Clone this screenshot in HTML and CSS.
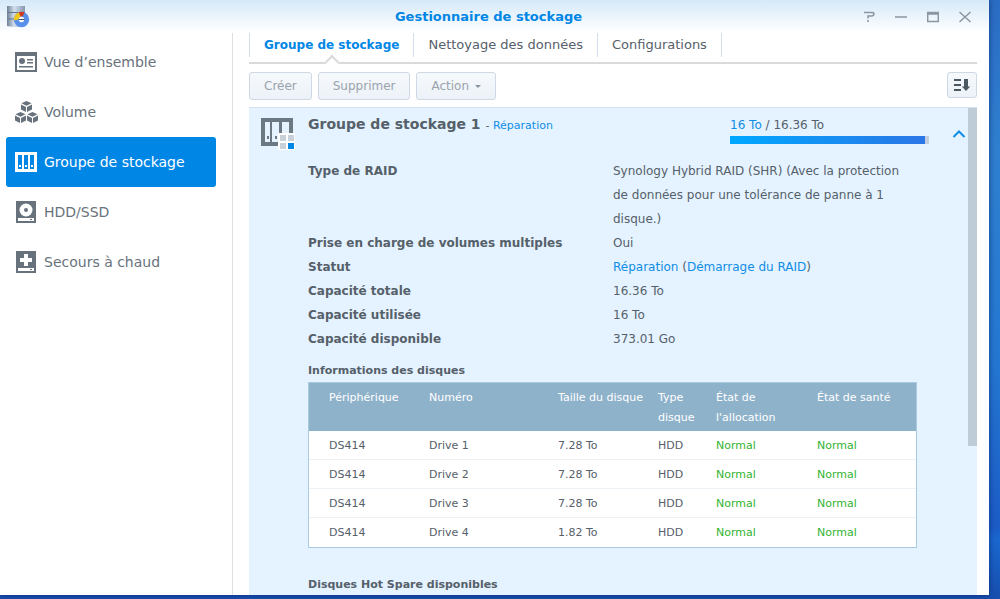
FILE: index.html
```html
<!DOCTYPE html>
<html lang="fr">
<head>
<meta charset="utf-8">
<meta name="viewport" content="width=device-width, initial-scale=1">
<title>Gestionnaire de stockage</title>
<link rel="stylesheet" href="styles.css">
</head>
<body>
<div class="window">
  <header class="titlebar">
    <svg class="app-icon" width="24" height="24" viewBox="0 0 24 24" aria-hidden="true">
      <defs><linearGradient id="cyl"><stop offset="0" stop-color="#6f8197"/><stop offset=".4" stop-color="#d3dfec"/><stop offset="1" stop-color="#8597ae"/></linearGradient></defs>
      <path d="M1 1h18v20q-9 2-18 0z" fill="url(#cyl)"/>
      <path d="M1 7.500h18M1 14h18" stroke="#66758a" stroke-width="1"/>
      <circle cx="15.500" cy="14.500" r="5.200" fill="none" stroke="#5890ec" stroke-width="5"/>
      <path d="M10.300 15a5.200 5.200 0 0 1 4-5.500" fill="none" stroke="#efc51c" stroke-width="5"/>
      <path d="M13.600 9.300a5.200 5.200 0 0 1 4 0" fill="none" stroke="#d13a20" stroke-width="4.500"/>
      <circle cx="15.500" cy="14.500" r="2.700" fill="#f5f8fb"/>
      <path d="M12.500 14.500h6" stroke="#40536b" stroke-width="1"/>
    </svg>
    <h1 class="title">Gestionnaire de stockage</h1>
    <div class="window-controls">
      <button type="button" aria-label="Aide"><svg width="12" height="12" viewBox="0 0 12 12"><path d="M1 1.500h8q2 0 2 1.500t-2 2H5v2.500M4 10h2" /></svg></button>
      <button type="button" aria-label="Réduire"><svg width="12" height="12" viewBox="0 0 12 12"><path d="M0 6h12"/></svg></button>
      <button type="button" aria-label="Agrandir"><svg width="12" height="12" viewBox="0 0 12 12"><path d="M.7 1.500h10.600v9H.7zM1 3h10"/></svg></button>
      <button type="button" aria-label="Fermer"><svg width="12" height="12" viewBox="0 0 12 12"><path d="M.5 1l11 10M11.500 1l-11 10"/></svg></button>
    </div>
  </header>
  <div class="body">
    <nav class="sidebar">
      <a class="nav-item" href="#ensemble">
        <svg width="24" height="24" viewBox="0 0 24 24" fill="currentColor"><path fill-rule="evenodd" d="M1 2h22v20H1zM3 6v14h18V6z"/><circle cx="8" cy="11" r="3"/><path d="M13 9h6v1.500h-6zM13 12h6v1.500h-6zM5 16h14v1.500H5z"/></svg>
        Vue d’ensemble
      </a>
      <a class="nav-item" href="#volume">
        <svg width="24" height="24" viewBox="0 0 24 24" fill="currentColor">
          <g id="cube"><path d="M12.500 1l5 2.300-5 2.400-5-2.400z"/><path d="M7 4.500l5 2.400v5.200l-5-2.500zM18 4.500l-5 2.400v5.200l5-2.500z"/></g>
          <use href="#cube" x="-6" y="11"/><use href="#cube" x="6" y="11"/>
        </svg>
        Volume
      </a>
      <a class="nav-item active" href="#groupe" aria-current="page">
        <svg width="24" height="24" viewBox="0 0 24 24" fill="currentColor"><path fill-rule="evenodd" d="M1 2h22v20H1zM4 5v14h4V5zM10 5v14h4V5zM16 5v14h4V5z"/><path d="M5 15h2v2H5zM11 15h2v2h-2zM17 15h2v2h-2z"/></svg>
        Groupe de stockage
      </a>
      <a class="nav-item" href="#hdd">
        <svg width="24" height="24" viewBox="0 0 24 24"><path d="M2 1h20v22H2z" fill="currentColor"/><circle cx="12" cy="10" r="6.500" fill="#fff"/><circle cx="12" cy="10" r="2" fill="currentColor"/><path d="M4 18h16v3H4z" fill="#fff"/><path d="M16 19h2v1h-2z" fill="currentColor"/></svg>
        HDD/SSD
      </a>
      <a class="nav-item" href="#secours">
        <svg width="24" height="24" viewBox="0 0 24 24"><path d="M2 1h20v22H2z" fill="currentColor"/><path d="M10 4h4v4h4v4h-4v4h-4v-4H6V8h4zM4 18h16v3H4z" fill="#fff"/><path d="M16 19h2v1h-2z" fill="currentColor"/></svg>
        Secours à chaud
      </a>
    </nav>
    <main class="main">
      <div class="tabs">
        <a class="tab active" href="#tab-groupe">Groupe de stockage</a>
        <a class="tab" href="#tab-nettoyage">Nettoyage des données</a>
        <a class="tab" href="#tab-config">Configurations</a>
      </div>
      <div class="toolbar">
        <button type="button" class="btn" disabled>Créer</button>
        <button type="button" class="btn" disabled>Supprimer</button>
        <button type="button" class="btn" disabled>Action <span class="caret"></span></button>
        <button type="button" class="btn sort" aria-label="Trier"><svg width="16" height="14" viewBox="0 0 16 14"><path d="M0 2h7M0 7h7M0 12h7" stroke="#4c5862" stroke-width="2"/><path d="M10 1h4v7.500h2.200L12 13 7.800 8.500H10z" fill="#4c5862"/></svg></button>
      </div>
      <section class="panel">
        <div class="group-head">
          <svg class="group-icon" width="36" height="34" viewBox="0 0 36 34">
            <path fill="#6c7882" fill-rule="evenodd" d="M1 1h32v28H1zM5 5v20h5V5zM12 5v20h7V5zM22 5v20h7V5z"/>
            <path fill="#6c7882" d="M7 19h2v3H7zM15 19h2v3h-2z"/>
            <path fill="#fff" d="M18 16h17v17H18z"/><path fill="#c8d1da" d="M20 18h6v6h-6zM28 18h6v6h-6zM20 26h6v6h-6z"/><path fill="#0086e5" d="M28 26h6v6h-6z"/>
          </svg>
          <h2 class="group-title">Groupe de stockage 1 <span class="group-status">- <span class="blue">Réparation</span></span></h2>
          <div class="usage">
            <div><span class="blue">16 To</span> / 16.36 To</div>
            <div class="bar"><div class="fill" style="width:98%"></div></div>
          </div>
          <button type="button" class="collapse" aria-label="Replier"><svg width="14" height="10" viewBox="0 0 14 10"><path d="M1.500 8L7 2.500 12.500 8" fill="none" stroke="#108de6" stroke-width="2"/></svg></button>
        </div>
        <div class="details">
          <dl class="props">
            <dt>Type de RAID</dt><dd>Synology Hybrid RAID (SHR) (Avec la protection de données pour une tolérance de panne à 1 disque.)</dd>
            <dt>Prise en charge de volumes multiples</dt><dd>Oui</dd>
            <dt>Statut</dt><dd><span class="blue">Réparation</span> (<span class="blue">Démarrage du RAID</span>)</dd>
            <dt>Capacité totale</dt><dd>16.36 To</dd>
            <dt>Capacité utilisée</dt><dd>16 To</dd>
            <dt>Capacité disponible</dt><dd>373.01 Go</dd>
          </dl>
          <h3 class="subhead">Informations des disques</h3>
          <table class="disks">
            <colgroup><col class="c-device"><col class="c-num"><col class="c-size"><col class="c-type"><col class="c-alloc"><col></colgroup>
            <thead><tr><th>Périphérique</th><th>Numéro</th><th>Taille du disque</th><th>Type disque</th><th>État de l'allocation</th><th>État de santé</th></tr></thead>
            <tbody>
              <tr><td>DS414</td><td>Drive 1</td><td>7.28 To</td><td>HDD</td><td class="ok">Normal</td><td class="ok">Normal</td></tr>
              <tr><td>DS414</td><td>Drive 2</td><td>7.28 To</td><td>HDD</td><td class="ok">Normal</td><td class="ok">Normal</td></tr>
              <tr><td>DS414</td><td>Drive 3</td><td>7.28 To</td><td>HDD</td><td class="ok">Normal</td><td class="ok">Normal</td></tr>
              <tr><td>DS414</td><td>Drive 4</td><td>1.82 To</td><td>HDD</td><td class="ok">Normal</td><td class="ok">Normal</td></tr>
            </tbody>
          </table>
          <h3 class="subhead spare">Disques Hot Spare disponibles</h3>
        </div>
        <div class="scrollbar"></div>
      </section>
    </main>
  </div>
</div>
</body>
</html>
```
FILE: styles.css
```css
* { box-sizing: border-box; }
body {
  margin: 0;
  height: 100vh;
  padding: 0 11px 4px 0;
  overflow: hidden;
  background: linear-gradient(#2b6dc4, #2f80d0 25%, #2478d2 60%, #1c5cc6 88%, #1a68d0 90%, #174fae);
  font-family: "DejaVu Sans", Verdana, sans-serif;
  font-size: 12px;
  color: #56606a;
}
h1, h2, h3, dl, dd { margin: 0; }
a { color: inherit; text-decoration: none; }
button { font: inherit; border: 0; background: none; padding: 0; }
svg { display: block; flex: none; }
.blue { color: #108de6; }

.window {
  height: 100%;
  display: flex;
  flex-direction: column;
  overflow: hidden;
  background: linear-gradient(#d6e9f9, #fff 33px);
  box-shadow: 0 0 6px rgba(0, 20, 80, .6);
}
.titlebar {
  flex: none;
  display: grid;
  grid-template-columns: 1fr auto 1fr;
  align-items: center;
  height: 33px;
  padding: 0 18px 0 6px;
}
.title { font-size: 13px; line-height: 16px; color: #0086e5; }
.window-controls { display: flex; justify-content: flex-end; gap: 20px; }
.window-controls path { fill: none; stroke: #8b96a2; stroke-width: 1.5; }

.body { flex: 1; min-height: 0; display: flex; }
.sidebar {
  flex: none;
  width: 233px;
  padding: 4px 16px 0 6px;
  border-right: 1px solid #dde0e2;
}
.nav-item {
  display: flex;
  align-items: center;
  gap: 6px;
  height: 50px;
  padding: 0 8px;
  border-radius: 3px;
  font-size: 14px;
  color: #68727c;
}
.nav-item.active { background: #0086e5; color: #fff; }

.main {
  flex: 1;
  min-width: 0;
  display: flex;
  flex-direction: column;
  padding: 0 12px 0 16px;
}
.tabs {
  flex: none;
  display: flex;
  height: 31px;
  padding-bottom: 5px;
  border-bottom: 2px solid #d8dadc;
}
.tab {
  position: relative;
  padding: 0 14px;
  border-right: 1px solid #d3dfeb;
  font-size: 13px;
  line-height: 24px;
}
.tab.active {
  border-left: 1px solid #d3dfeb;
  font-size: 12px;
  font-weight: bold;
  color: #0086e5;
}
.tab.active::after {
  content: "";
  position: absolute;
  left: 50%;
  bottom: -11px;
  width: 9px;
  height: 9px;
  border: solid #d8dadc;
  border-width: 2px 0 0 2px;
  background: #fff;
  transform: translateX(-50%) rotate(45deg);
}
.toolbar { flex: none; display: flex; gap: 6px; padding: 8px 0 7px; }
.btn {
  height: 28px;
  padding: 0 14px;
  border: 1px solid #cfd9e5;
  border-radius: 3px;
  background: linear-gradient(#f6f9fc, #ecf2f8);
  font-size: 12px;
  color: #9aa3ad;
}
.caret {
  display: inline-block;
  margin-left: 2px;
  border: solid transparent;
  border-width: 3px 3px 0;
  border-top-color: #8a949e;
  vertical-align: middle;
}
.btn.sort { margin-left: auto; height: 26px; width: 30px; padding: 0 6px; }

.panel {
  position: relative;
  flex: 1;
  min-height: 0;
  overflow: hidden;
  border-top: 1px solid #d3e1ed;
  background: #e4f3ff;
}
.group-head { display: flex; padding: 9px 11px 0 11px; height: 51px; }
.group-title { margin-left: 12px; flex: 1; font-size: 14px; line-height: 15px; }
.group-status { font-size: 11px; font-weight: normal; }
.usage { width: 199px; font-size: 12px; line-height: 16px; }
.bar { height: 8px; margin-top: 3px; background: #c4cede; }
.fill { height: 100%; background: linear-gradient(90deg, #00a8ff, #2c76e6); }
.collapse { align-self: flex-start; margin: 12px 0 0 23px; }
.details { padding: 0 60px 0 59px; }
.props {
  display: grid;
  grid-template-columns: 305px 1fr;
  line-height: 24px;
}
dt { font-weight: bold; }
.subhead { margin-top: 12px; font-size: 11px; line-height: 16px; }
.subhead.spare { margin-top: 29px; }
.disks {
  width: 100%;
  margin-top: 3px;
  table-layout: fixed;
  border-collapse: separate;
  border-spacing: 0;
  border: 1px solid #a9cbe0;
  background: #fff;
  font-size: 11px;
}
.c-device { width: 110px; }
.c-num { width: 129px; }
.c-size { width: 100px; }
.c-type { width: 58px; }
.c-alloc { width: 101px; }
.disks th, .disks td { padding: 0 0 0 10px; text-align: left; font-weight: normal; }
.disks th:first-child, .disks td:first-child { padding-left: 20px; }
.disks th {
  padding-top: 5px;
  padding-bottom: 3px;
  background: #8fb2cb;
  color: #fff;
  line-height: 20px;
  vertical-align: top;
}
.disks td { height: 29px; border-bottom: 1px solid #edf2f6; }
.disks tr:last-child td { border-bottom: 0; }
.disks .ok { color: #32b432; }
.scrollbar {
  position: absolute;
  top: 0;
  right: 0;
  width: 9px;
  height: 338px;
  background: #bdccd7;
}
```
